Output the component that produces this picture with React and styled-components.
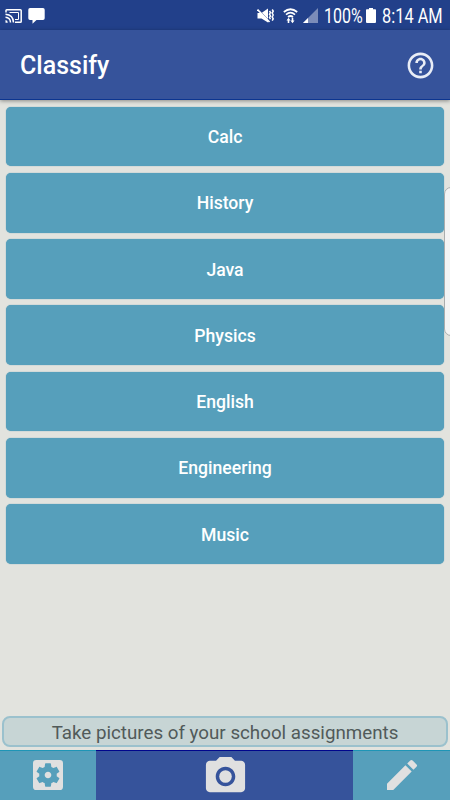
import { MdEdit, MdHelpOutline, MdPhotoCamera, MdSettingsApplications } from 'react-icons/md';
import styled, { createGlobalStyle } from 'styled-components';

const colors = {
  status: '#22408a',
  primary: '#36539b',
  accent: '#569fbb',
  background: '#e2e3de',
  icon: '#e0e0e0'
};

const classes = ['Calc', 'History', 'Java', 'Physics', 'English', 'Engineering', 'Music'];

const GlobalStyle = createGlobalStyle`
  * {
    box-sizing: border-box;
  }
  body {
    margin: 0;
    overflow: hidden;
    font-family: Roboto, 'Liberation Sans', sans-serif;
  }
`;

const Screen = styled.div`
  position: relative;
  display: flex;
  flex-direction: column;
  width: 450px;
  height: 800px;
  overflow: hidden;
  background: ${colors.background};
`;

const StatusBar = styled.div`
  display: flex;
  flex: none;
  align-items: center;
  height: 30px;
  padding: 1px 8px 0 5px;
  color: #fff;
  background: ${colors.status};
  svg {
    display: block;
    flex: none;
  }
`;

const Notifications = styled.div`
  display: flex;
  flex: 1;
  align-items: center;
  gap: 6px;
`;

const Indicators = styled.div`
  display: flex;
  align-items: center;
  gap: ${props => props.$gap || 0}px;
  margin-right: ${props => props.$right || 0}px;
`;

const StatusText = styled.span`
  display: block;
  width: ${props => props.$width}px;
  margin: 2px ${props => props.$right || 0}px 0 ${props => props.$left}px;
  font-size: 19.5px;
  line-height: 22px;
  white-space: nowrap;
  span {
    display: inline-block;
    transform: scaleX(${props => props.$scale});
    transform-origin: left;
  }
`;

const AppBar = styled.header`
  display: flex;
  z-index: 1;
  flex: none;
  align-items: center;
  justify-content: space-between;
  height: 70px;
  padding: 1px 14.5px 0 20px;
  color: #fff;
  background: ${colors.primary};
  border-bottom: 1px solid #0c3590;
  box-shadow: 0 1px 4px rgba(0, 0, 0, 0.4);
`;

const Title = styled.h1`
  margin: 2px 0 0;
  font-size: 25px;
  font-weight: 500;
  line-height: 30px;
`;

const HelpButton = styled.div`
  display: flex;
  color: #e9edf6;
  font-size: 31px;
`;

const ClassList = styled.main`
  display: flex;
  flex: 1;
  flex-direction: column;
  gap: 6.5px;
  padding: 6.5px 6.4px 0;
`;

const ClassButton = styled.div`
  display: flex;
  flex: none;
  align-items: center;
  justify-content: center;
  height: 59.75px;
  padding-top: 1.6px;
  color: #fff;
  font-size: 17.6px;
  font-weight: 500;
  background: ${colors.accent};
  border-radius: 5px;
  box-shadow: 0 0 1px #4a93ae;
`;

const EdgeHandle = styled.div`
  position: absolute;
  top: 187px;
  right: -8px;
  width: 14px;
  height: 149px;
  background: #f4f4f4;
  border: 1px solid #aaadad;
  border-radius: 7px;
`;

const Hint = styled.div`
  display: flex;
  flex: none;
  align-items: center;
  justify-content: center;
  height: 31px;
  margin: 0 2px 3px;
  padding-top: 2px;
  color: #515a5a;
  font-size: 18.75px;
  background: #c7d5d5;
  border: 2px solid #9bc1cd;
  border-radius: 8px;
`;

const BottomBar = styled.nav`
  display: grid;
  flex: none;
  grid-template-columns: 96px 257px 97px;
  height: 50px;
`;

const Tab = styled.div`
  display: flex;
  align-items: center;
  justify-content: center;
  padding-top: ${props => (props.$main ? 3 : 0)}px;
  padding-left: ${props => (props.$main ? 1 : 0)}px;
  color: ${colors.icon};
  font-size: ${props => (props.$main ? 47 : 40)}px;
  background: ${props => (props.$main ? colors.primary : colors.accent)};
  box-shadow: inset 0 1px ${props => (props.$main ? '#00058c' : '#1e95b6')};
`;

const CastIcon = () => (
  <svg width="17" height="14" viewBox="0 0 17 14" fill="none" stroke="#fff" strokeWidth="1.500">
    <path d="M1 3.500V1.500q0-.7.7-.7h13.600q.9 0 .9.800v10.800q0 .8-.9.800H10" />
    <path d="M4.500 3.500h9v7h-3.500" strokeWidth="1" />
    <path d="M.5 5.200q7.700.5 8 8.300M.5 8.300q4.800.3 5 5.200" />
    <path d="M.5 11q2.200.2 2.300 2.700H.5z" fill="#fff" stroke="none" />
  </svg>
);

const MessageIcon = () => (
  <svg width="17" height="16" viewBox="0 0 17 16" fill="#fff">
    <path d="M2 0h13q1.700 0 1.700 1.700v8.600q0 1.700-1.700 1.700H8.500L4.500 15.700V12H2Q.3 12 .3 10.300V1.700Q.3 0 2 0z" />
  </svg>
);

const MutedIcon = () => (
  <svg width="17" height="16" viewBox="0 0 17 16" fill="none" stroke="#fff">
    <path d="M.5 5h4L11 .5v14L4.500 10.500h-4z" fill="#fff" stroke="none" />
    <path d="M2 1.800l10.500 11" stroke={colors.status} strokeWidth="0.700" />
    <path d="M.5 1.500l12 12.500" strokeWidth="1.700" />
    <path d="M12.500 3l1 1.500-1 1.700 1 1.700-1 1.700 1 1.500M15.200 1.500l1 1.700-1 1.900 1 1.900-1 1.900 1 1.900-1 1.900" strokeWidth="1.500" />
  </svg>
);

const WifiIcon = () => (
  <svg width="15" height="16" viewBox="0 0 15 16" fill="none" stroke="#fff" strokeWidth="1.700">
    <path d="M.8 4q6.700-5.500 13.400 0M3 6.600q4.500-3.800 9 0M5 9q2.500-2 5 0" />
    <path d="M3.500 12.500l2-2.700 2 2.700H6.300V15H4.700v-2.500zM7.500 12.500h1.200V9.800h1.600v2.700h1.200l-2 2.700z" fill="#fff" stroke="none" />
  </svg>
);

const SignalIcon = () => (
  <svg width="15" height="15" viewBox="0 0 15 15">
    <path d="M15 0v15H0z" fill="#7b8cb9" />
    <path d="M5 10v5H0z" fill="#fff" />
  </svg>
);

const BatteryIcon = () => (
  <svg width="10" height="15" viewBox="0 0 10 15" fill="#fff">
    <path d="M3 0h4v1.300h2.200q.8 0 .8.800V14q0 1-1 1H1q-1 0-1-1V2.100q0-.8.8-.8H3z" />
  </svg>
);

const App = () => {
  return (
    <>
      <GlobalStyle />
      <Screen>
        <StatusBar>
          <Notifications>
            <CastIcon />
            <MessageIcon />
          </Notifications>
          <Indicators $gap={9} $right={5}>
            <MutedIcon />
            <WifiIcon />
          </Indicators>
          <Indicators>
            <SignalIcon />
            <StatusText $width={38} $left={6.5} $right={4} $scale={0.82}>
              <span>100%</span>
            </StatusText>
            <BatteryIcon />
            <StatusText $width={60} $left={6} $scale={0.84}>
              <span>8:14 AM</span>
            </StatusText>
          </Indicators>
        </StatusBar>

        <AppBar>
          <Title>Classify</Title>
          <HelpButton>
            <MdHelpOutline />
          </HelpButton>
        </AppBar>

        <ClassList>
          {classes.map(name => (
            <ClassButton key={name}>{name}</ClassButton>
          ))}
        </ClassList>

        <Hint>Take pictures of your school assignments</Hint>

        <BottomBar>
          <Tab>
            <MdSettingsApplications />
          </Tab>
          <Tab $main>
            <MdPhotoCamera />
          </Tab>
          <Tab>
            <MdEdit />
          </Tab>
        </BottomBar>
        <EdgeHandle />
      </Screen>
    </>
  );
};

export default App;
